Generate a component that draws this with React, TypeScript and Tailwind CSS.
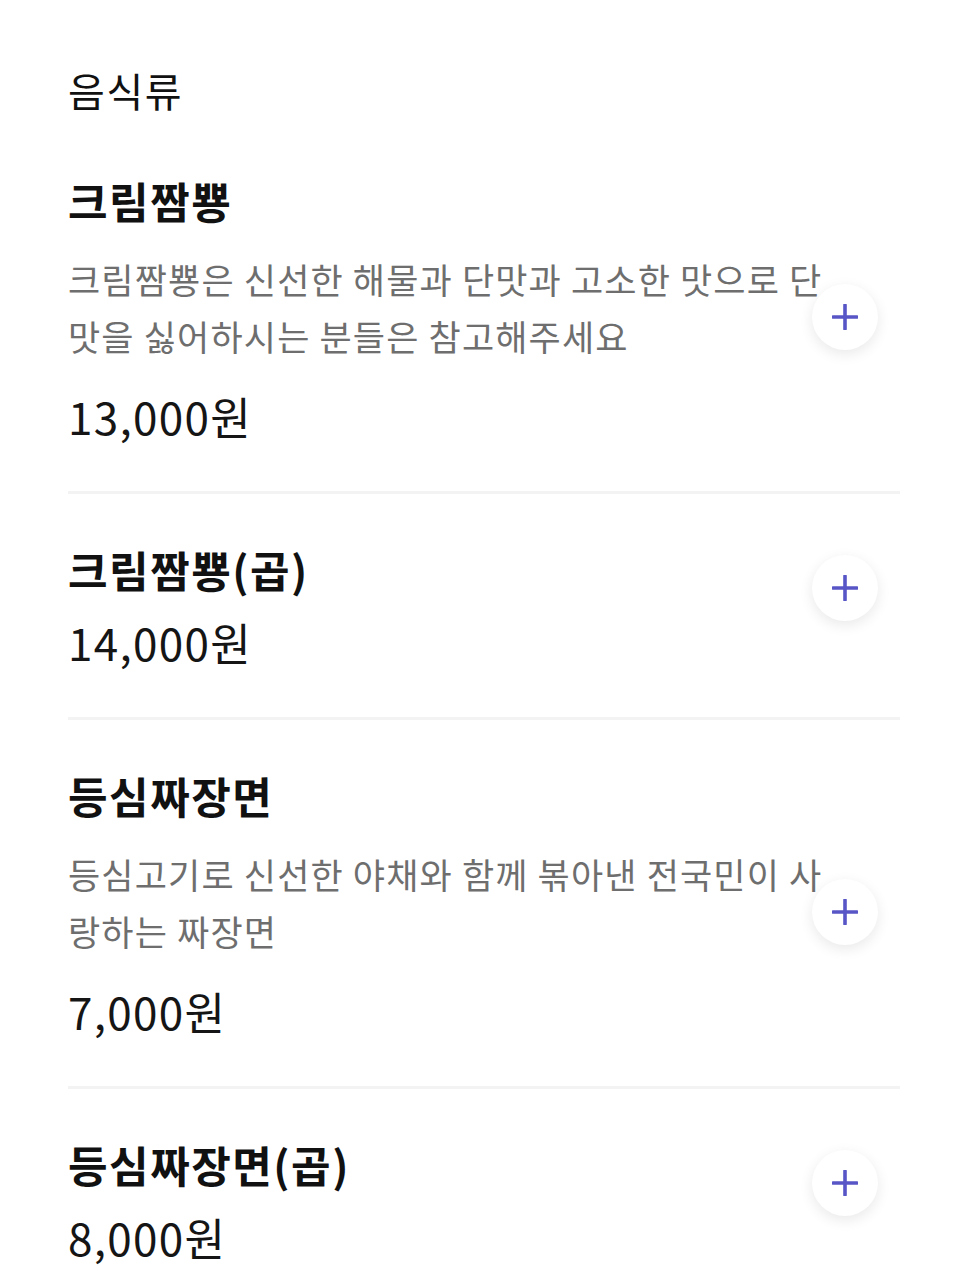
import React from "react";

type MenuItem = {
  name: string;
  desc?: string;
  price: string;
};

const items: MenuItem[] = [
  {
    name: "크림짬뿅",
    desc: "크림짬뿅은 신선한 해물과 단맛과 고소한 맛으로 단맛을 싫어하시는 분들은 참고해주세요",
    price: "13,000원",
  },
  { name: "크림짬뿅(곱)", price: "14,000원" },
  {
    name: "등심짜장면",
    desc: "등심고기로 신선한 야채와 함께 볶아낸 전국민이 사랑하는 짜장면",
    price: "7,000원",
  },
  { name: "등심짜장면(곱)", price: "8,000원" },
];

function PlusButton({ withDesc }: { withDesc: boolean }) {
  return (
    <button
      className={
        "shrink-0 w-[66px] h-[66px] rounded-full bg-white flex items-center justify-center shadow-[0_4px_14px_rgba(0,0,0,0.09)] -ml-[24px] mr-[22px] " +
        (withDesc ? "mt-[110px]" : "mt-[12px]")
      }
    >
      <svg width="26" height="26" viewBox="0 0 26 26" fill="none">
        <path d="M13 1v24M1 13h24" stroke="#5856c6" strokeWidth="3.6" strokeLinecap="round" />
      </svg>
    </button>
  );
}

function MenuRow({ item, last }: { item: MenuItem; last: boolean }) {
  return (
    <div
      className={
        "flex items-start pt-[49px] pb-[50px] " +
        (last ? "" : "border-b-[3px] border-[#f3f3f3]")
      }
    >
      <div className="flex-1 min-w-0">
        <h2 className="text-[43px] leading-[52px] font-bold text-[#111111] tracking-[0.035em]">
          {item.name}
        </h2>
        {item.desc && (
          <p className="mt-[24px] text-[35px] leading-[57px] text-[#6e6e6e] tracking-[0.033em]">
            {item.desc}
          </p>
        )}
        <div
          className={
            "text-[44px] leading-[50px] text-[#151515] tracking-[0.03em] " +
            (item.desc ? "mt-[27px]" : "mt-[22px]")
          }
        >
          {item.price}
        </div>
      </div>
      <PlusButton withDesc={!!item.desc} />
    </div>
  );
}

export default function App() {
  return (
    <div
      className="min-h-screen bg-white pl-[68px] pr-[66px] pt-[66px]"
      style={{ fontFamily: '"Noto Sans CJK KR", "Noto Sans", sans-serif' }}
    >
      <h1 className="text-[40px] leading-[48px] text-[#111111] mb-[11px] tracking-[0.04em]">
        음식류
      </h1>
      {items.map((item, i) => (
        <MenuRow key={item.name} item={item} last={i === items.length - 1} />
      ))}
    </div>
  );
}
